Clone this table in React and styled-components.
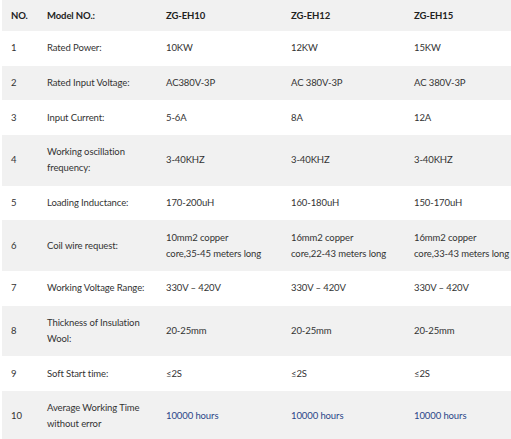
import React from "react";
import styled, { createGlobalStyle } from "styled-components";

const Global = createGlobalStyle`
  html, body { margin: 0; padding: 0; background: #fff; overflow: hidden; }
  body { font-family: Lato, "Noto Sans", sans-serif; }
`;

const Wrap = styled.div`
  padding-left: 2px;
  width: 530px;
`;

const Table = styled.table`
  border-collapse: collapse;
  table-layout: fixed;
  width: 528px;
  font-size: 9.5px;
  letter-spacing: -0.1px;
  color: #333;
`;

const Row = styled.tr`
  background: ${(p) => (p.$shade ? "#f1f1f1" : "#fff")};
`;

const Th = styled.th`
  text-align: left;
  font-weight: 700;
  color: #222;
  padding: 7.5px 9px;
  line-height: 16px;
  white-space: nowrap;
`;

const Td = styled.td`
  padding: 9.33px 9px;
  line-height: 16px;
  vertical-align: middle;
  white-space: nowrap;
  color: ${(p) => (p.$accent ? "#2b4688" : "#333")};
`;

const rows = [
  ["1", ["Rated Power:"], ["10KW"], ["12KW"], ["15KW"]],
  ["2", ["Rated Input Voltage:"], ["AC380V-3P"], ["AC 380V-3P"], ["AC 380V-3P"]],
  ["3", ["Input Current:"], ["5-6A"], ["8A"], ["12A"]],
  ["4", ["Working oscillation", "frequency:"], ["3-40KHZ"], ["3-40KHZ"], ["3-40KHZ"]],
  ["5", ["Loading Inductance:"], ["170-200uH"], ["160-180uH"], ["150-170uH"]],
  [
    "6",
    ["Coil wire request:"],
    ["10mm2 copper", "core,35-45 meters long"],
    ["16mm2 copper", "core,22-43 meters long"],
    ["16mm2 copper", "core,33-43 meters long"],
  ],
  ["7", ["Working Voltage Range:"], ["330V – 420V"], ["330V – 420V"], ["330V – 420V"]],
  ["8", ["Thickness of Insulation", "Wool:"], ["20-25mm"], ["20-25mm"], ["20-25mm"]],
  ["9", ["Soft Start time:"], ["≤2S"], ["≤2S"], ["≤2S"]],
  ["10", ["Average Working Time", "without error"], ["10000 hours"], ["10000 hours"], ["10000 hours"]],
];

function Lines({ lines }) {
  return lines.map((l, k) => (
    <React.Fragment key={k}>
      {k > 0 && <br />}
      {l}
    </React.Fragment>
  ));
}

export default function App() {
  return (
    <>
      <Global />
      <Wrap>
        <Table>
          <colgroup>
            <col style={{ width: 36 }} />
            <col style={{ width: 119 }} />
            <col style={{ width: 125 }} />
            <col style={{ width: 123 }} />
            <col style={{ width: 125 }} />
          </colgroup>
          <thead>
            <Row $shade>
              <Th>NO.</Th>
              <Th>Model NO.:</Th>
              <Th>ZG-EH10</Th>
              <Th>ZG-EH12</Th>
              <Th>ZG-EH15</Th>
            </Row>
          </thead>
          <tbody>
            {rows.map((r, i) => (
              <Row key={r[0]} $shade={i % 2 === 1}>
                <Td>{r[0]}</Td>
                {r.slice(1).map((c, j) => (
                  <Td key={j} $accent={r[0] === "10" && j >= 1}>
                    <Lines lines={c} />
                  </Td>
                ))}
              </Row>
            ))}
          </tbody>
        </Table>
      </Wrap>
    </>
  );
}
